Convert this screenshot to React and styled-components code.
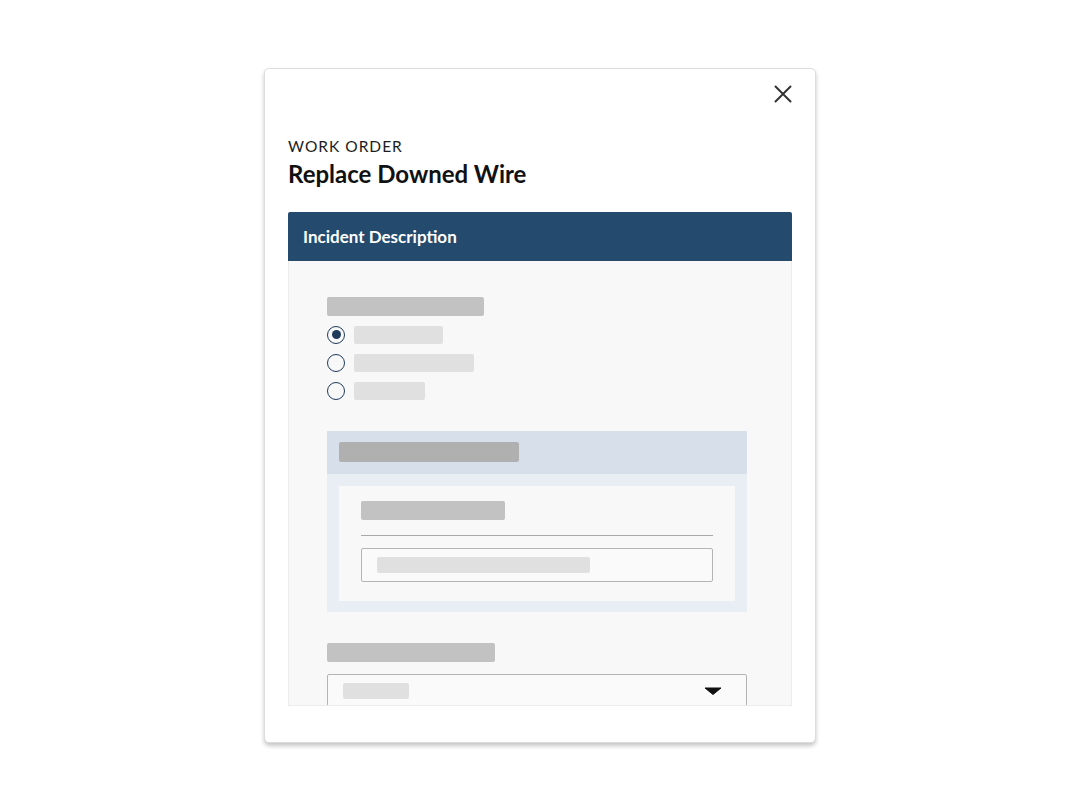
import styled, { createGlobalStyle } from "styled-components";

const GlobalStyle = createGlobalStyle`
  html, body {
    margin: 0;
    padding: 0;
    background: #ffffff;
    font-family: Lato, "Open Sans", sans-serif;
  }
`;

const Page = styled.div`
  width: 1080px;
  height: 810px;
  display: flex;
  align-items: center;
  justify-content: center;
`;

const Card = styled.div`
  box-sizing: border-box;
  width: 552px;
  height: 675px;
  background: #ffffff;
  border: 1px solid #dcdcdc;
  border-radius: 5px;
  box-shadow: 0 3px 4px rgba(0, 0, 0, 0.22);
  padding: 16px 23px 36px;
  display: flex;
  flex-direction: column;
`;

const TopBar = styled.div`
  display: flex;
  justify-content: flex-end;
  height: 18px;
`;

const CloseButton = styled.button`
  border: 0;
  background: none;
  padding: 0;
  width: 18px;
  height: 18px;
  cursor: pointer;
  display: flex;
`;

const Eyebrow = styled.div`
  margin-top: 34px;
  font-size: 15.5px;
  letter-spacing: 1px;
  color: #1c1c1c;
  line-height: 18px;
`;

const Title = styled.h1`
  margin: 5px 0 0;
  font-size: 24px;
  font-weight: 700;
  color: #111111;
  line-height: 28px;
`;

const SectionHead = styled.div`
  margin-top: 24px;
  height: 49px;
  background: #244a6e;
  border-radius: 2px 2px 0 0;
  color: #ffffff;
  font-size: 17px;
  font-weight: 700;
  display: flex;
  align-items: center;
  padding-left: 15px;
`;

const SectionBody = styled.div`
  flex: 1;
  min-height: 0;
  overflow: hidden;
  background: #f8f8f8;
  border: 1px solid #ececec;
  border-top: 0;
  padding: 36px 44px 0 38px;
`;

const Bar = styled.div`
  width: ${(p) => p.w}px;
  height: ${(p) => p.h || 19}px;
  background: ${(p) => p.bg || "#c2c2c2"};
  border-radius: 2px;
`;

const RadioList = styled.div`
  display: flex;
  flex-direction: column;
  gap: 10px;
  margin-top: 10px;
`;

const RadioRow = styled.div`
  display: flex;
  align-items: center;
  gap: 9px;
`;

const RadioDot = styled.span`
  box-sizing: border-box;
  width: 18px;
  height: 18px;
  border-radius: 50%;
  border: 1.5px solid #1f3a5a;
  display: flex;
  align-items: center;
  justify-content: center;
  &::after {
    content: "";
    width: 9px;
    height: 9px;
    border-radius: 50%;
    background: ${(p) => (p.checked ? "#1f3a5a" : "transparent")};
  }
`;

const Group = styled.div`
  margin-top: 31px;
  background: #e9eef4;
  padding-bottom: 11px;
`;

const GroupHead = styled.div`
  height: 43px;
  background: #d7e0ea;
  display: flex;
  align-items: center;
  padding-left: 12px;
  margin-bottom: 12px;
`;

const GroupInner = styled.div`
  margin: 0 12px;
  background: #f8f8f8;
  padding: 15px 22px 19px;
`;

const Rule = styled.div`
  height: 1px;
  background: #a8a8a8;
  margin: 15px 0 12px;
`;

const Field = styled.div`
  box-sizing: border-box;
  height: 34px;
  border: 1px solid #b4b4b4;
  border-radius: 2px;
  background: #fafafa;
  display: flex;
  align-items: center;
  padding: 0 ${(p) => p.pr || 15}px 0 ${(p) => p.pl || 15}px;
  justify-content: space-between;
`;

const FieldLabel = styled.div`
  margin-top: 31px;
  margin-bottom: 12px;
`;

const Caret = styled.svg`
  width: 18px;
  height: 8px;
  display: block;
`;

export default function App() {
  return (
    <Page>
      <GlobalStyle />
      <Card>
        <TopBar>
          <CloseButton aria-label="Close">
            <svg width="18" height="18" viewBox="0 0 18 18">
              <path
                d="M1.5 1.5 L16.5 16.5 M16.5 1.5 L1.5 16.5"
                stroke="#333"
                strokeWidth="2"
                strokeLinecap="round"
              />
            </svg>
          </CloseButton>
        </TopBar>
        <Eyebrow>WORK ORDER</Eyebrow>
        <Title>Replace Downed Wire</Title>
        <SectionHead>Incident Description</SectionHead>
        <SectionBody>
          <Bar w={157} />
          <RadioList>
            <RadioRow>
              <RadioDot checked />
              <Bar w={89} h={18} bg="#e0e0e0" />
            </RadioRow>
            <RadioRow>
              <RadioDot />
              <Bar w={120} h={18} bg="#e0e0e0" />
            </RadioRow>
            <RadioRow>
              <RadioDot />
              <Bar w={71} h={18} bg="#e0e0e0" />
            </RadioRow>
          </RadioList>
          <Group>
            <GroupHead>
              <Bar w={180} h={20} bg="#b0b0b0" />
            </GroupHead>
            <GroupInner>
              <Bar w={144} />
              <Rule />
              <Field>
                <Bar w={213} h={16} bg="#e0e0e0" />
              </Field>
            </GroupInner>
          </Group>
          <FieldLabel>
            <Bar w={168} />
          </FieldLabel>
          <Field pl={15} pr={24}>
            <Bar w={66} h={16} bg="#e0e0e0" />
            <Caret viewBox="0 0 18 8">
              <path d="M1 1 L17 1 L9 7.5 Z" fill="#111" strokeLinejoin="round" stroke="#111" strokeWidth="1" />
            </Caret>
          </Field>
        </SectionBody>
      </Card>
    </Page>
  );
}
